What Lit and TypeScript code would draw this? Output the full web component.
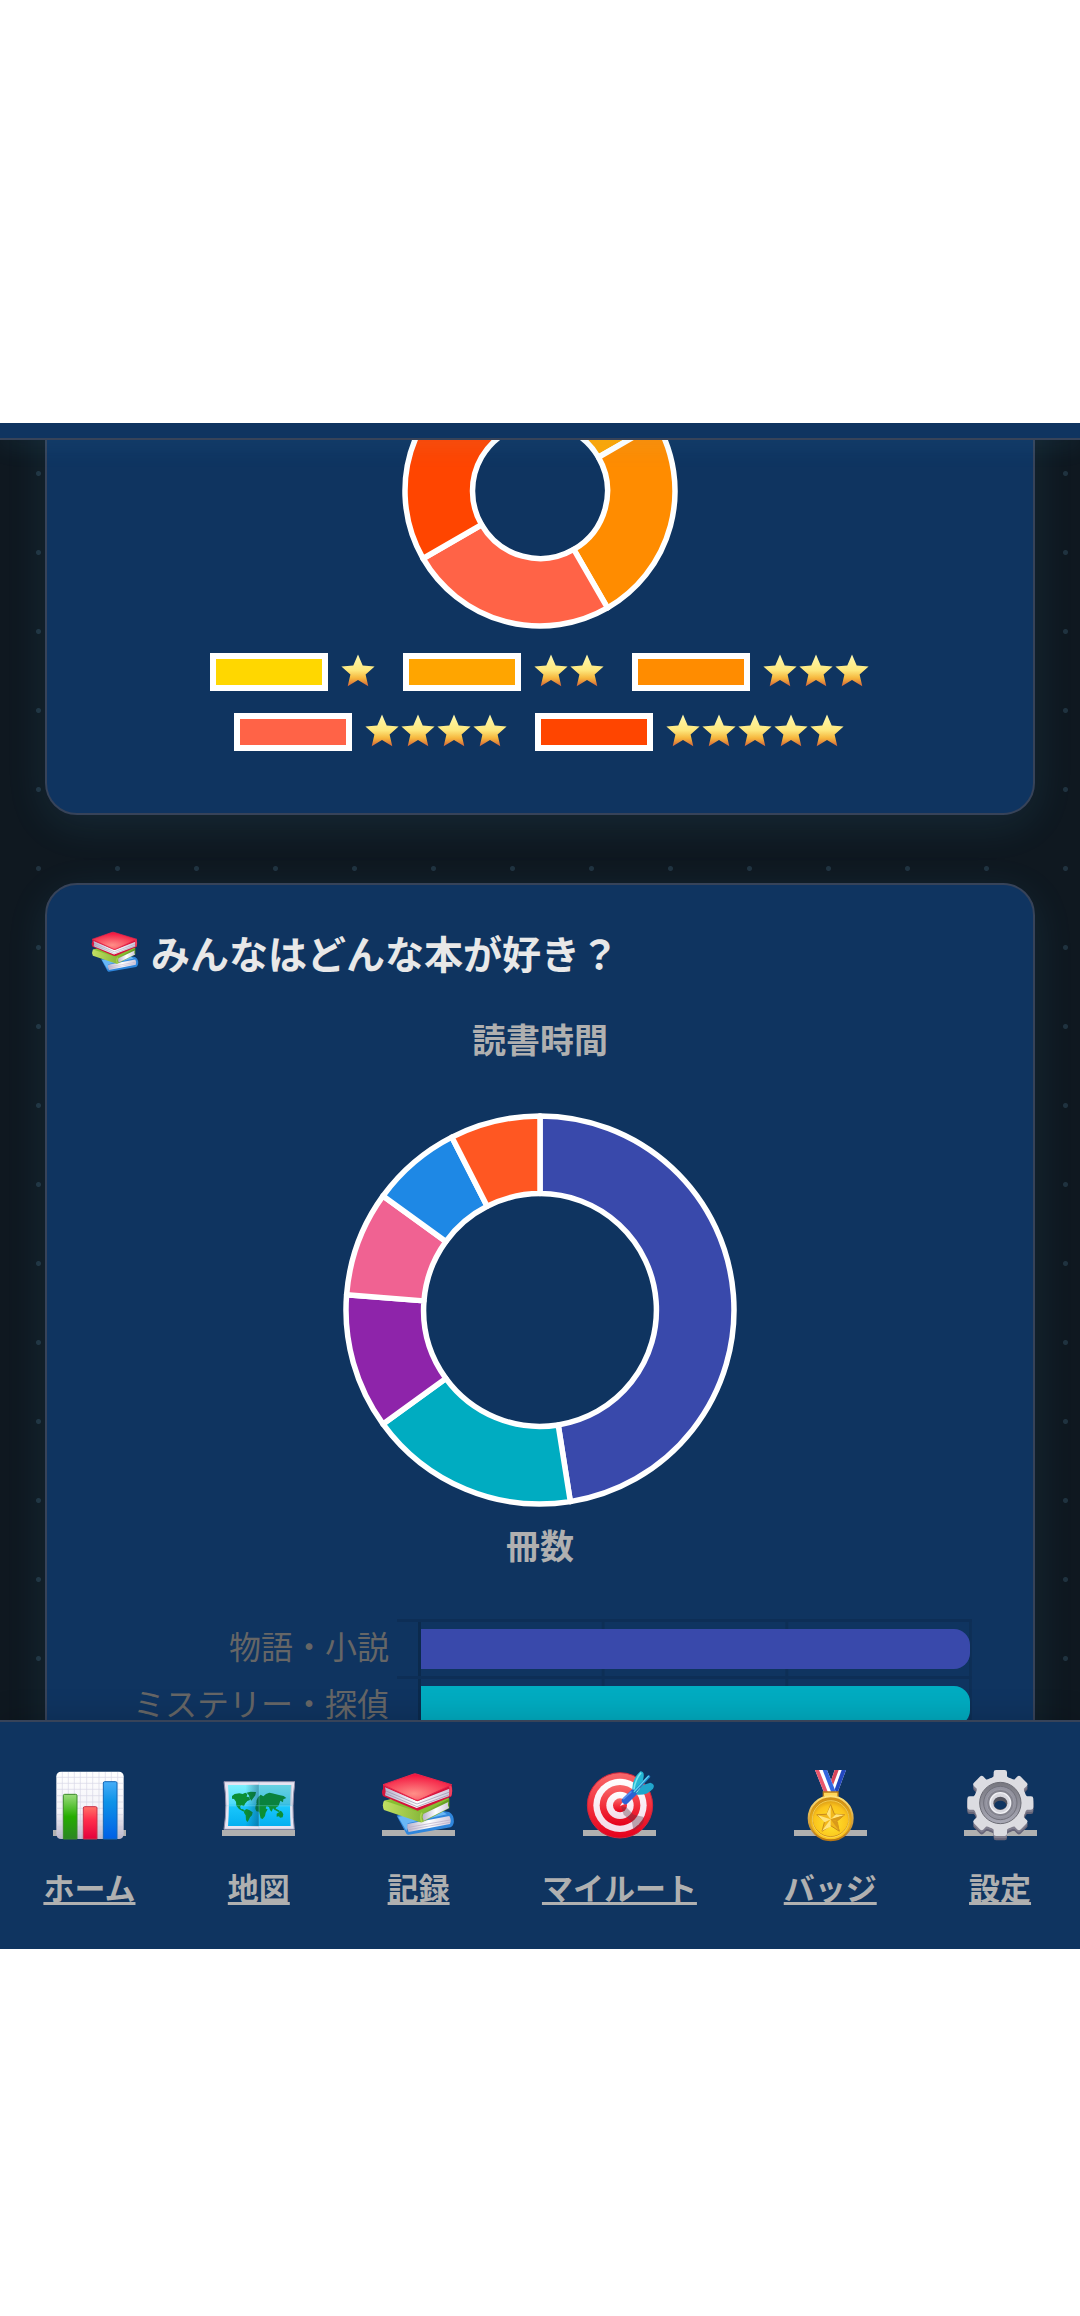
import { LitElement, css, html, svg } from 'lit';

type Slice = { value: number; color: string };

const RATING_SLICES: (Slice & { stars: number })[] = [
    { stars: 1, value: 1, color: '#ffd700' },
    { stars: 2, value: 1, color: '#ffa500' },
    { stars: 3, value: 3, color: '#ff8c00' },
    { stars: 4, value: 3, color: '#ff6347' },
    { stars: 5, value: 4, color: '#ff4500' },
];

const TIME_SLICES: Slice[] = [
    { value: 38, color: '#3949ab' },
    { value: 14, color: '#00acc1' },
    { value: 9, color: '#8e24aa' },
    { value: 7, color: '#f06292' },
    { value: 6, color: '#1e88e5' },
    { value: 6, color: '#ff5722' },
];

const BOOK_COUNTS = [
    { label: '物語・小説', value: 3, color: '#3949ab' },
    { label: 'ミステリー・探偵', value: 3, color: '#00acc1' },
];
const MAX_COUNT = 3;

const NAV_ITEMS = [
    { icon: 'chart', label: 'ホーム', href: '#home' },
    { icon: 'map', label: '地図', href: '#map' },
    { icon: 'books', label: '記録', href: '#records' },
    { icon: 'target', label: 'マイルート', href: '#route' },
    { icon: 'medal', label: 'バッジ', href: '#badges' },
    { icon: 'gear', label: '設定', href: '#settings' },
];

// five-pointed star around (cx, cy)
function starPoints(cx: number, cy: number, outer: number, inner: number) {
    return Array.from({ length: 10 }, (_, i) => {
        const r = i % 2 ? inner : outer;
        const a = (i * Math.PI) / 5;
        return `${(cx + r * Math.sin(a)).toFixed(1)},${(cy - r * Math.cos(a)).toFixed(1)}`;
    }).join(' ');
}

const chartArt = svg`
    <defs>
        <linearGradient id="paper" x2="0" y2="1"><stop stop-color="#fff"/><stop offset=".6" stop-color="#f3f2f8"/><stop offset="1" stop-color="#b9b4c8"/></linearGradient>
        <linearGradient id="green" x2="0" y2="1"><stop stop-color="#9bdc7c"/><stop offset=".5" stop-color="#25ad00"/><stop offset="1" stop-color="#2c8524"/></linearGradient>
        <linearGradient id="red" x2="0" y2="1"><stop stop-color="#ff7268"/><stop offset=".4" stop-color="#ff2e4c"/><stop offset="1" stop-color="#e4003c"/></linearGradient>
        <linearGradient id="blue" x2="0" y2="1"><stop stop-color="#46adf8"/><stop offset=".35" stop-color="#0e93e8"/><stop offset="1" stop-color="#005fe6"/></linearGradient>
    </defs>
    <rect x="10" y="11" width="202" height="202" rx="14" fill="url(#paper)"/>
    <path d="M28 12V212M46 12V212M64 12V212M82 12V212M101 12V212M119 12V212M138 12V212M157 12V212M175 12V212M194 12V212M11 28H211M11 46H211M11 64H211M11 83H211M11 102H211M11 121H211M11 140H211M11 159H211M11 177H211M11 196H211" stroke="#c9c9de" stroke-width="2" opacity=".7"/>
    <path d="M31 213V83q0-4 4-4h33q4 0 4 4V213z" fill="url(#green)" stroke="#3b8a2a" stroke-width="3"/>
    <path d="M91 213V120q0-4 4-4h33q4 0 4 4V213z" fill="url(#red)" stroke="#c8324a" stroke-width="3"/>
    <path d="M151 213V45q0-4 4-4h33q4 0 4 4V213z" fill="url(#blue)" stroke="#1268b8" stroke-width="3"/>
`;

const mapArt = svg`
    <defs>
        <linearGradient id="sea" x2="0" y2="1"><stop stop-color="#7df0fd"/><stop offset=".45" stop-color="#4fdcfb"/><stop offset=".55" stop-color="#18c5fb"/><stop offset="1" stop-color="#04b0f0"/></linearGradient>
        <linearGradient id="fold"><stop stop-color="#04385c" stop-opacity="0"/><stop offset="1" stop-color="#04385c" stop-opacity=".42"/></linearGradient>
    </defs>
    <path d="M6 41H219Q208 112 217 184H6Q17 112 6 41z" fill="#e6e4f2" stroke="#8f8ca8" stroke-width="3"/>
    <path d="M18 51H207Q202 112 206 174H18Q23 112 18 51z" fill="url(#sea)"/>
    <g fill="#0b8f35">
        <path d="M30 84l8-6 14-2 10 2 8-4 6 4-2 8 8 2 2 8-8 3-7 8-3 8-8-3-4 4 3 7 7 1 4 8-8-4-9-5-8-10-1-12-6-8-6-1z"/>
        <path d="M74 74l12-3 16 1-2 10-6 8-6 8-5-7-2-9z"/>
        <path d="M67 127l7-4 9 4 9 6-2 9-6 6-5 10-3 4-4-6-1-14-5-8z"/>
        <path d="M104 96l4-8 8-8 8 5 8-7 10-4 8 2 9 2 12 3 14 3 8 6-9 4-1 9-8-5-3 9-3 8-6 3-4 9-6-6-4 10-5-5-3-9-7-2-5 8-7-8-8-5-5 2-6-6z"/>
        <path d="M101 112l6-7 12 2 9 7 4 8 5 2-6 10-2 10-7 9-6-2-3-12-2-8-8-1-3-8z"/>
        <path d="M164 137l8-5 3-4 5 3 4 8-2 9-8 1-3-4-7 1zM158 121l7 3 9 5-4 3-10-5z"/>
    </g>
    <path d="M70 50H111V175H70z" fill="url(#fold)"/>
    <path d="M111 51h98v62h-98z" fill="#06486c" opacity=".18"/>
    <path d="M12 113H212M111 42V183" stroke="#7fdcf4" stroke-width="2" opacity=".5"/>
`;

const booksArt = svg`
    <defs>
        <radialGradient id="cover" cx=".45" cy=".75" r=".7"><stop stop-color="#ff8f88"/><stop offset="1" stop-color="#f3163f"/></radialGradient>
        <linearGradient id="leaf"><stop stop-color="#c2e063"/><stop offset="1" stop-color="#5f9c1e"/></linearGradient>
        <linearGradient id="page"><stop stop-color="#b9b2cc"/><stop offset=".5" stop-color="#fff"/><stop offset="1" stop-color="#cfc8dc"/></linearGradient>
    </defs>
    <path d="M44 143l28 52q2 6 8 5l126-22q12-8 9-26-2-14-14-20L110 118z" fill="#2f86dc"/>
    <path d="M48 146l26 44 3-24 118-27-20-12z" fill="#69b7f6"/>
    <path d="M76 168l126-24q7 12 2 24L80 192q-7-12-4-24z" fill="url(#page)"/>
    <path d="M80 178l124-22M80 185l124-22" stroke="#b6aac6" stroke-width="2"/>
    <path d="M6 98q-7 14 0 28l106 36q6 2 12-1l78-40V92L100 76z" fill="url(#leaf)"/>
    <path d="M8 98l112 38 82-44-14-10z" fill="#86bf32"/>
    <path d="M124 138l75-36q-4 10 2 18l-76 38q-6-10-1-20z" fill="url(#page)"/>
    <path d="M120 134q-8 14 0 28" fill="none" stroke="#a9d44c" stroke-width="5"/>
    <path d="M3 50v12q-6 10 0 22l100 43q4 2 8 0l96-41q6-14 2-36l-103 38z" fill="#d5143c"/>
    <path d="M9 58l97 42 96-38v22l-98 36L9 82q5-12 0-24z" fill="url(#page)"/>
    <path d="M10 68l95 40 98-36M10 76l95 40 98-36" fill="none" stroke="#9a90aa" stroke-width="2"/>
    <path d="M3 50L95 18q4-1 8 0l106 32-98 46q-5 2-10 0z" fill="url(#cover)" stroke="#e8264c" stroke-width="3" stroke-linejoin="round"/>
    <path d="M204 54q6 14 0 30" fill="none" stroke="#f0405e" stroke-width="7"/>
`;

const targetArt = svg`
    <defs>
        <linearGradient id="ring" x2="0" y2="1"><stop stop-color="#f8696b"/><stop offset=".5" stop-color="#f3303c"/><stop offset="1" stop-color="#e5001c"/></linearGradient>
        <linearGradient id="band" x2="0" y2="1"><stop stop-color="#fff"/><stop offset="1" stop-color="#f3dbe8"/></linearGradient>
    </defs>
    <circle cx="111" cy="112" r="98" fill="url(#ring)" stroke="#d3243a" stroke-width="3"/>
    <circle cx="111" cy="112" r="80" fill="url(#band)"/>
    <circle cx="111" cy="112" r="61" fill="url(#ring)"/>
    <circle cx="111" cy="112" r="41" fill="url(#band)"/>
    <circle cx="111" cy="112" r="21" fill="url(#ring)"/>
    <path d="M114 114l16 4 22 22 28 6q8 10-4 24l-24 18-6-28-24-20z" fill="#5b3a48" opacity=".38"/>
    <path d="M111 114l13-20 10 10z" fill="#f7f3fa"/>
    <path d="M148 68q-2-36 24-58 12 0 10 16l-4 22-20 26z" fill="#24b7d4"/>
    <path d="M158 78l20-26 24-8q16 4 8 18-20 22-48 18z" fill="#21a6cc"/>
    <path d="M152 72q2-34 22-58" fill="none" stroke="#76e5ee" stroke-width="5"/>
    <path d="M127 98L150 76" stroke="#2c62d4" stroke-width="21" stroke-linecap="round"/>
    <path d="M122 92l22-20" stroke="#5a92f0" stroke-width="5" stroke-linecap="round"/>
    <path d="M154 72L197 26" stroke="#1c7fc4" stroke-width="9" stroke-linecap="round"/>
    <path d="M154 70L196 25" stroke="#5fd5f0" stroke-width="4" stroke-linecap="round"/>
`;

const medalArt = svg`
    <defs>
        <radialGradient id="gold" cx=".5" cy=".6" r=".55"><stop stop-color="#ffe62e"/><stop offset=".7" stop-color="#fbc31c"/><stop offset="1" stop-color="#d18f14"/></radialGradient>
        <linearGradient id="rim" x2="0" y2="1"><stop stop-color="#ffe27a"/><stop offset="1" stop-color="#b87612"/></linearGradient>
    </defs>
    <path d="M122 6h34l-26 70H98z" fill="#fff"/>
    <path d="M122 6h12l-26 70H98z" fill="#d8455a"/>
    <path d="M143 6h13l-26 70h-12z" fill="#2448c0"/>
    <path d="M63 6h36l28 70H91z" fill="#fff"/>
    <path d="M63 6h12l28 70H91z" fill="#e8566c"/>
    <path d="M86 6h13l28 70h-14z" fill="#3466de"/>
    <path d="M88 72h44v14H88z" fill="#ffd65a" stroke="#b87a18" stroke-width="4"/>
    <circle cx="110" cy="151" r="66" fill="url(#gold)" stroke="url(#rim)" stroke-width="6"/>
    <circle cx="110" cy="151" r="55" fill="none" stroke="#c98a14" stroke-width="3"/>
    <circle cx="110" cy="153" r="55" fill="none" stroke="#ffe570" stroke-width="2"/>
    <polygon points=${starPoints(110, 154, 44, 19)} fill="#f2b81c" stroke="#c88a1c" stroke-width="3" stroke-linejoin="round"/>
    <path d="M110 154V112L98 138zM110 154L70 141l22 22zM110 154l42-13-26-2zM110 154l-26 34 26-12z" fill="#ffe47c"/>
    <path d="M110 154l26 36-4-28zM110 154l20 6 20-18z" fill="#d99a1a"/>
`;

const GEAR_ANGLES = [0, 45, 90, 135, 180, 225, 270, 315];

function gearBody(fill: string) {
    return svg`
        <circle r="80" fill=${fill}/>
        ${GEAR_ANGLES.map(
            (a) => svg`<path d="M-30-70L-20-80V-92q0-7 7-7h26q7 0 7 7v12l10 10z" fill=${fill} transform="rotate(${a})"/>`,
        )}
    `;
}

const gearArt = svg`
    <defs>
        <linearGradient id="dish" x2="0" y2="1"><stop stop-color="#77777f"/><stop offset="1" stop-color="#a9a9b6"/></linearGradient>
    </defs>
    <g transform="translate(109 118)">${gearBody('#676578')}</g>
    <g transform="translate(109 112)">${gearBody('#807e8e')}</g>
    <g transform="translate(109 105)">
        ${gearBody('#dcdce1')}
        <circle r="62" fill="url(#dish)" stroke="#6c6c75" stroke-width="3"/>
        <circle r="50" fill="#93939f" stroke="#71717c" stroke-width="3"/>
        <circle r="41" fill="#84848f" stroke="#a5a5b0" stroke-width="2"/>
        <circle r="31" fill="#d7d7de" stroke="#f1f1f5" stroke-width="4"/>
        <ellipse cy="1" rx="21" ry="20" fill="#54545f"/>
        <ellipse cy="6" rx="18" ry="13" fill="#0f3460"/>
    </g>
`;

const ICONS = {
    chart: chartArt,
    map: mapArt,
    books: booksArt,
    target: targetArt,
    medal: medalArt,
    gear: gearArt,
};

class DonutChart extends LitElement {
    static properties = {
        slices: { attribute: false },
        radius: { type: Number },
        cutout: { type: Number },
    };

    slices: Slice[] = [];
    radius = 100;
    cutout = 0.5;

    static styles = css`
        :host {
            display: block;
        }

        svg {
            display: block;
            margin: 0 auto;
        }
    `;

    slicePath(from: number, to: number) {
        const outer = this.radius - 3;
        const inner = outer * this.cutout;
        const large = to - from > 0.5 ? 1 : 0;
        const point = (r: number, t: number) => {
            const a = t * 2 * Math.PI;
            return `${(r * Math.sin(a)).toFixed(2)} ${(-r * Math.cos(a)).toFixed(2)}`;
        };
        return `M${point(outer, from)}A${outer} ${outer} 0 ${large} 1 ${point(outer, to)}L${point(inner, to)}A${inner} ${inner} 0 ${large} 0 ${point(inner, from)}Z`;
    }

    render() {
        const total = this.slices.reduce((sum, s) => sum + s.value, 0);
        const size = this.radius * 2;
        let at = 0;
        return html`
            <svg width=${size} height=${size} viewBox="${-this.radius} ${-this.radius} ${size} ${size}" aria-hidden="true">
                ${this.slices.map((s) => {
                    const from = at;
                    at += s.value / total;
                    return svg`<path d=${this.slicePath(from, at)} fill=${s.color} stroke="#fff" stroke-width="5.5" stroke-linejoin="round"/>`;
                })}
            </svg>
        `;
    }
}

customElements.define('donut-chart', DonutChart);

class BottomNav extends LitElement {
    static styles = css`
        :host {
            display: block;
        }

        nav {
            display: flex;
            justify-content: space-around;
            padding: 46px 0 44px;
            border-top: 2px solid #374359;
            background: #0f3460;
            box-shadow: 0 -5px 26px rgba(0, 0, 0, 0.15);
        }

        a {
            display: flex;
            flex-direction: column;
            align-items: center;
            gap: 25px;
            color: #b0b0b0;
            text-decoration: none;
        }

        svg {
            display: block;
            width: 73px;
            height: 76px;
        }

        .label {
            font-size: 31px;
            line-height: 36px;
            font-weight: 700;
            text-decoration: underline 3px;
            text-underline-offset: 2px;
            text-decoration-skip-ink: none;
        }
    `;

    render() {
        return html`
            <nav>
                ${NAV_ITEMS.map(
                    (item) => html`
                        <a href=${item.href}>
                            <svg viewBox="0 0 219 228" aria-hidden="true">
                                <rect y="186" width="219" height="18" fill="#b0b0b0" />
                                ${ICONS[item.icon]}
                            </svg>
                            <span class="label">${item.label}</span>
                        </a>
                    `,
                )}
            </nav>
        `;
    }
}

customElements.define('bottom-nav', BottomNav);

class AppRoot extends LitElement {
    static styles = css`
        :host {
            display: flex;
            box-sizing: border-box;
            height: 100vh;
            padding: 423px 0 367px;
            background: #fff;
            color: #e8e8e8;
            font-family: 'Noto Sans CJK JP', 'Noto Sans', sans-serif;
        }

        .screen {
            display: flex;
            flex: 1;
            flex-direction: column;
            min-width: 0;
            overflow: hidden;
        }

        header {
            position: relative;
            z-index: 1;
            padding-top: 15px;
            border-bottom: 2px solid #374359;
            background: #0f3460;
            box-shadow: 0 5px 26px rgba(79, 195, 247, 0.1);
        }

        bottom-nav {
            position: relative;
            z-index: 1;
        }

        main {
            display: flex;
            flex: 1;
            flex-direction: column;
            gap: 68px;
            min-height: 0;
            padding: 42px 45px;
            box-sizing: border-box;
            overflow-y: auto;
            scrollbar-width: none;
            background: radial-gradient(circle, #20323f 2px, transparent 3px) -1px -6px / 79px 79px #0f1820;
        }

        .card {
            flex: none;
            padding: 42px;
            border: 2px solid #374359;
            border-radius: 32px;
            background: #0f3460;
            box-shadow: 0 10px 42px rgba(79, 195, 247, 0.1);
        }

        .legend {
            display: flex;
            flex-wrap: wrap;
            justify-content: center;
            gap: 22px 26px;
            max-width: 700px;
            margin: 24px auto 20px;
            padding: 0;
            list-style: none;
        }

        .legend li {
            display: flex;
            align-items: center;
            gap: 13px;
        }

        .swatch {
            width: 106px;
            height: 26px;
            border: 6px solid #fff;
        }

        .stars {
            display: flex;
        }

        .stars svg {
            width: 36px;
            height: 36px;
        }

        h2 {
            display: flex;
            align-items: center;
            gap: 12px;
            margin: 0 0 38px;
            font-size: 39px;
            line-height: 50px;
        }

        h2 svg {
            width: 50px;
            height: 44px;
        }

        h3 {
            margin: 0;
            color: #b0b0b0;
            font-size: 34px;
            line-height: 48px;
            text-align: center;
        }

        .time-chart {
            padding: 50px 0 14px;
        }

        .bars {
            margin: 50px 0 0;
            padding: 0 19px 0 0;
            list-style: none;
        }

        .bars li {
            display: grid;
            grid-template-columns: 300px 1fr;
            gap: 8px;
        }

        .bar-label {
            color: #666;
            font-size: 32px;
            line-height: 52px;
            text-align: right;
        }

        .track {
            padding-left: 21px;
            border-top: 3px solid rgba(0, 0, 0, 0.1);
        }

        .plot {
            padding: 7px 2px 7px 0;
            border-left: 3px solid rgba(0, 0, 0, 0.1);
            background: linear-gradient(to right, transparent calc(100% - 3px), rgba(0, 0, 0, 0.1) 0) 0 0 /
                calc(100% / 3) 100%;
        }

        .bar {
            height: 40px;
            border-radius: 0 16px 16px 0;
        }
    `;

    // the page opens part-way down, once the charts have their height
    async firstUpdated() {
        const charts = [...this.renderRoot.querySelectorAll<DonutChart>('donut-chart')];
        await Promise.all(charts.map((chart) => chart.updateComplete));
        this.renderRoot.querySelector('main')!.scrollTop = 173;
    }

    renderStar() {
        return html`
            <svg viewBox="0 0 36 36" aria-hidden="true">
                <defs>
                    <linearGradient id="shine" x2="0" y2="1">
                        <stop stop-color="#fff9b0" />
                        <stop offset=".5" stop-color="#fde77c" />
                        <stop offset=".75" stop-color="#f6b63c" />
                        <stop offset="1" stop-color="#d4623a" />
                    </linearGradient>
                </defs>
                <polygon points=${starPoints(17, 18, 17.5, 8)} fill="url(#shine)" />
            </svg>
        `;
    }

    renderRatings() {
        return html`
            <section class="card">
                <donut-chart .slices=${RATING_SLICES} .radius=${138} .cutout=${0.5}></donut-chart>
                <ul class="legend">
                    ${RATING_SLICES.map(
                        (s) => html`
                            <li>
                                <span class="swatch" style="background:${s.color}"></span>
                                <span class="stars">${Array.from({ length: s.stars }, () => this.renderStar())}</span>
                            </li>
                        `,
                    )}
                </ul>
            </section>
        `;
    }

    renderGenres() {
        return html`
            <section class="card">
                <h2><svg viewBox="-12 8 231 202" aria-hidden="true">${booksArt}</svg>みんなはどんな本が好き？</h2>
                <h3>読書時間</h3>
                <donut-chart class="time-chart" .slices=${TIME_SLICES} .radius=${197} .cutout=${0.6}></donut-chart>
                <h3>冊数</h3>
                <ul class="bars">
                    ${BOOK_COUNTS.map(
                        (b) => html`
                            <li>
                                <span class="bar-label">${b.label}</span>
                                <div class="track">
                                    <div class="plot">
                                        <div
                                            class="bar"
                                            style="width:${(b.value / MAX_COUNT) * 100}%;background:${b.color}"
                                        ></div>
                                    </div>
                                </div>
                            </li>
                        `,
                    )}
                </ul>
            </section>
        `;
    }

    render() {
        return html`
            <div class="screen">
                <header></header>
                <main>${this.renderRatings()} ${this.renderGenres()}</main>
                <bottom-nav></bottom-nav>
            </div>
        `;
    }
}

customElements.define('app-root', AppRoot);
